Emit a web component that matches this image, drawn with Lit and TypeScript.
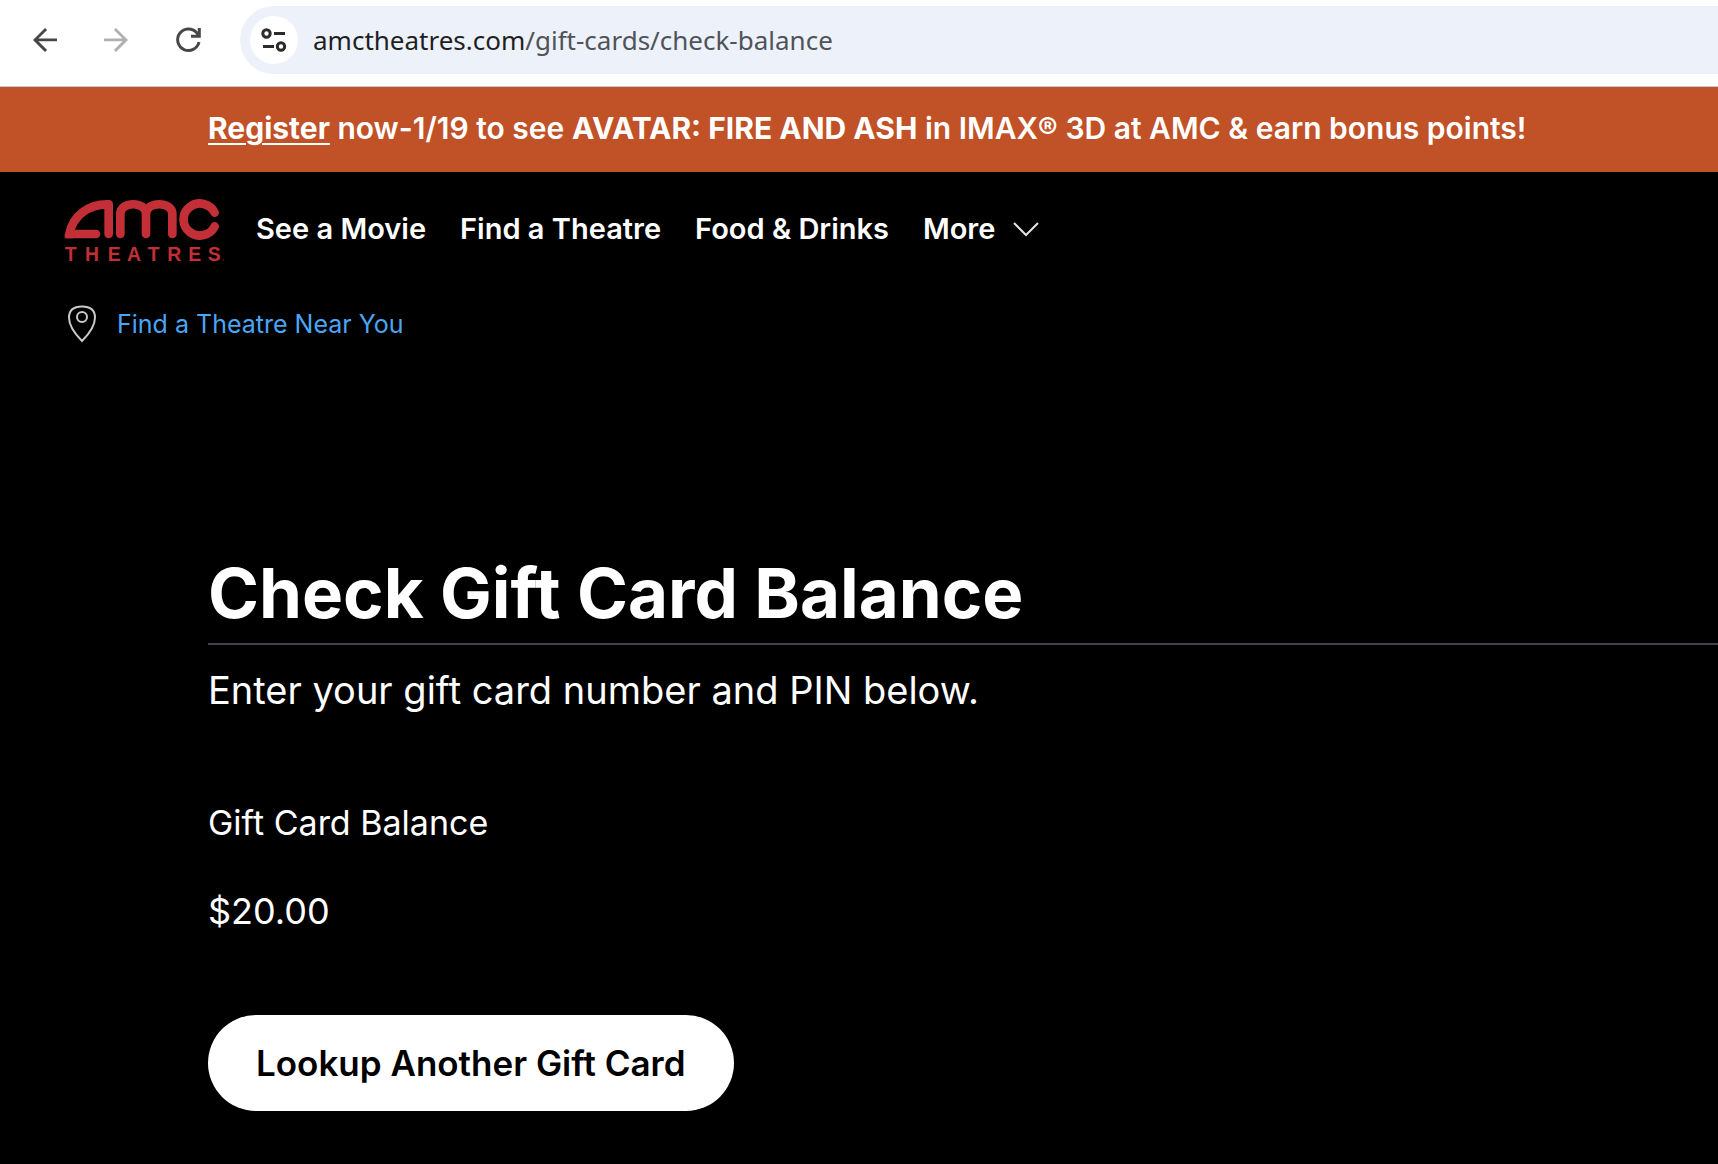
import { LitElement, html, css, svg } from "lit";
import { customElement, property } from "lit/decorators.js";

const glyphs = {
  back: svg`<path d="M30 16.600H11.400l8.700-8.600L18 6 6 18l12 12 2.100-2.100-8.700-8.600H30z" fill="currentColor"/>`,
  forward: svg`<path d="M6 16.600h18.600l-8.700-8.600L18 6l12 12-12 12-2.100-2.100 8.700-8.600H6z" fill="currentColor"/>`,
  reload: svg`<path d="M30 20A10.800 10.800 0 1 1 27.500 10.500L30 14M30.300 6V14.300H22" fill="none" stroke="currentColor" stroke-width="3"/>`,
};

@customElement("browser-bar")
export class BrowserBar extends LitElement {
  @property() host = "";
  @property() path = "";

  static styles = css`
    :host {
      display: block;
    }
    .bar {
      display: flex;
      align-items: center;
      height: 79px;
      padding: 0 0 7px 27px;
      gap: 35px;
      background: #fff;
      border-bottom: 1px solid #c3ccd4;
    }
    button {
      display: grid;
      place-items: center;
      padding: 0;
      border: 0;
      background: none;
      color: #474747;
    }
    .nav-button {
      width: 36px;
      height: 36px;
    }
    .nav-button:disabled {
      color: #b0b0b0;
    }
    .address {
      flex: 1;
      display: flex;
      align-items: center;
      gap: 15px;
      height: 68px;
      padding-left: 10px;
      border-radius: 34px 0 0 34px;
      background: #edf1f9;
      font: 26px/36px "Noto Sans", "Open Sans", sans-serif;
      color: #1f1f1f;
    }
    .site-info {
      width: 48px;
      height: 48px;
      border-radius: 50%;
      background: #fff;
      color: #2b2b2b;
    }
    .path {
      color: #505358;
    }
  `;

  render() {
    return html`
      <div class="bar">
        <button class="nav-button" aria-label="Back">
          <svg width="36" height="36" viewBox="0 0 36 36">${glyphs.back}</svg>
        </button>
        <button class="nav-button" aria-label="Forward" disabled>
          <svg width="36" height="36" viewBox="0 0 36 36">${glyphs.forward}</svg>
        </button>
        <button class="nav-button" aria-label="Reload">
          <svg width="36" height="36" viewBox="0 0 36 36">${glyphs.reload}</svg>
        </button>
        <div class="address">
          <button class="site-info" aria-label="View site information">
            <svg width="26" height="26" viewBox="0 0 26 26" fill="none" stroke="currentColor" stroke-width="3">
              <circle cx="5.500" cy="6.500" r="3.700" />
              <path d="M13 6.500h11M2 19.500h11" />
              <circle cx="20" cy="19.500" r="3.700" />
            </svg>
          </button>
          <span>${this.host}<span class="path">${this.path}</span></span>
        </div>
      </div>
    `;
  }
}

@customElement("site-header")
export class SiteHeader extends LitElement {
  static styles = css`
    :host {
      display: block;
    }
    a {
      color: inherit;
      text-decoration: none;
    }
    .top {
      display: flex;
      align-items: center;
      gap: 32px;
      padding: 27px 64px 0;
    }
    .logo {
      display: block;
      height: 64px;
    }
    .logo svg {
      overflow: visible;
    }
    nav {
      display: flex;
      align-items: center;
      gap: 34px;
      padding-bottom: 4px;
      font-size: 29px;
      line-height: 36px;
      font-weight: 600;
    }
    .more {
      display: flex;
      align-items: center;
      gap: 18px;
      padding: 0;
      border: 0;
      background: none;
      color: inherit;
      font: inherit;
    }
    .near {
      display: flex;
      align-items: center;
      gap: 20px;
      padding: 42px 67px 0;
      font-size: 25px;
      line-height: 38px;
    }
    .near a {
      color: #4ba5f5;
    }
  `;

  render() {
    return html`
      <div class="top">
        <a class="logo" href="#" aria-label="AMC Theatres">
          <svg width="160" height="64" viewBox="72 57 480 192">
            <g fill="none" stroke="#c22f36" stroke-width="26" stroke-linecap="round" stroke-linejoin="round">
              <path d="M206 162V73C148 71 98 106 88 162H168" />
              <path d="M241 162V102C241 63 318 63 318 102V162M318 102C318 63 397 63 397 102V162" />
              <path d="M524 98A49 48 0 1 0 524 139" />
            </g>
            <path d="M74 175V162H100V175Z" fill="#c22f36" />
            <text x="74 135 203 261 323 382 445 503" y="243" fill="#c22f36"
              font-family="Liberation Sans, sans-serif" font-weight="700" font-size="58">THEATRES</text>
            <circle cx="550" cy="240" r="2" fill="#7c1e24" />
          </svg>
        </a>
        <nav>
          <a href="#">See a Movie</a>
          <a href="#">Find a Theatre</a>
          <a href="#">Food &amp; Drinks</a>
          <button class="more">
            More
            <svg width="26" height="16" viewBox="0 0 26 16" fill="none" stroke="#e4e4e4" stroke-width="2">
              <path d="M1 2L13 14 25 2" />
            </svg>
          </button>
        </nav>
      </div>
      <div class="near">
        <svg width="30" height="38" viewBox="0 0 30 38" fill="none" stroke="#c9c9c9" stroke-width="2">
          <path d="M15 36C10 31 2 21 2 12.500C2 5 7 1.500 15 1.500S28 5 28 12.500C28 21 20 31 15 36Z" />
          <circle cx="15" cy="12" r="5" />
        </svg>
        <a href="#">Find a Theatre Near You</a>
      </div>
    `;
  }
}

@customElement("app-root")
export class AppRoot extends LitElement {
  static styles = css`
    :host {
      display: block;
      min-height: 100vh;
      background: #000;
      color: #fff;
      font-family: Inter, "Liberation Sans", sans-serif;
    }
    .banner {
      padding: 21px 64px 23px 208px;
      background: #c15127;
      font-size: 30px;
      line-height: 41px;
      font-weight: 600;
    }
    .banner a {
      color: inherit;
      font-weight: 700;
      text-decoration-thickness: 2px;
      text-underline-offset: 4px;
    }
    .banner strong {
      font-weight: 700;
    }
    main {
      padding: 210px 0 52px 208px;
    }
    h1 {
      margin: 0;
      padding-bottom: 10px;
      border-bottom: 2px solid #3c454d;
      font-size: 69px;
      line-height: 80px;
      font-weight: 700;
    }
    p,
    h2 {
      margin: 0;
      font-weight: 400;
    }
    .intro {
      padding-top: 20px;
      font-size: 38px;
      line-height: 50px;
    }
    .label {
      padding-top: 84px;
      font-size: 34px;
      line-height: 48px;
    }
    .amount {
      padding-top: 40px;
      font-size: 36px;
      line-height: 48px;
    }
    .lookup {
      margin-top: 80px;
      height: 96px;
      padding: 0 48px;
      border: 0;
      border-radius: 48px;
      background: #fff;
      color: #000;
      font: 600 35px/48px Inter, "Liberation Sans", sans-serif;
    }
  `;

  render() {
    return html`
      <browser-bar host="amctheatres.com" path="/gift-cards/check-balance"></browser-bar>
      <div class="banner">
        <a href="#">Register</a> now-1/19 to see <strong>AVATAR: FIRE AND ASH</strong> in IMAX® 3D at AMC &amp; earn
        bonus points!
      </div>
      <site-header></site-header>
      <main>
        <h1>Check Gift Card Balance</h1>
        <p class="intro">Enter your gift card number and PIN below.</p>
        <h2 class="label">Gift Card Balance</h2>
        <p class="amount">$20.00</p>
        <button class="lookup">Lookup Another Gift Card</button>
      </main>
    `;
  }
}
